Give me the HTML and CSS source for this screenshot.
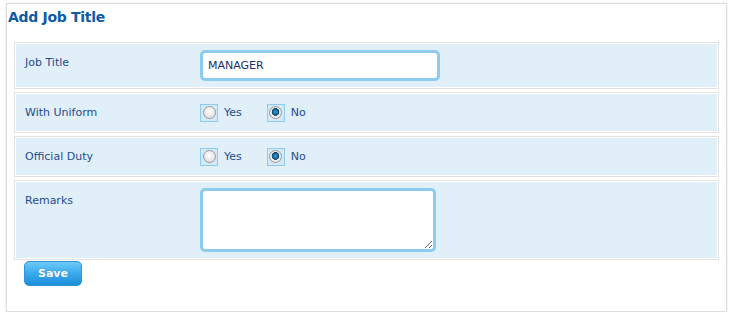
FILE: index.html
```html
<!DOCTYPE html>
<html lang="en">
<head>
    <meta charset="UTF-8">
    <meta name="viewport" content="width=device-width, initial-scale=1.0">
    <title>Add Job Title</title>
    <link rel="stylesheet" href="styles.css">
</head>
<body>
    <div class="panel">
        <h2 class="panel-title">Add Job Title</h2>
        <form class="form">
            <div class="row">
                <label class="label" for="jobTitle">Job Title</label>
                <div class="field">
                    <input type="text" id="jobTitle" class="text-input" value="MANAGER">
                </div>
            </div>
            <div class="row">
                <span class="label">With Uniform</span>
                <div class="field">
                    <label class="choice"><span class="radio-box"><input type="radio" name="uniform"></span>Yes</label>
                    <label class="choice"><span class="radio-box"><input type="radio" name="uniform" checked></span>No</label>
                </div>
            </div>
            <div class="row">
                <span class="label">Official Duty</span>
                <div class="field">
                    <label class="choice"><span class="radio-box"><input type="radio" name="duty"></span>Yes</label>
                    <label class="choice"><span class="radio-box"><input type="radio" name="duty" checked></span>No</label>
                </div>
            </div>
            <div class="row row-last">
                <label class="label" for="remarks">Remarks</label>
                <div class="field">
                    <textarea id="remarks" class="text-area"></textarea>
                </div>
            </div>
            <div class="actions">
                <button type="button" class="btn-save">Save</button>
            </div>
        </form>
    </div>
</body>
</html>
```

FILE: styles.css
```css
body {
    margin: 0;
    background-color: white;
    font-family: "DejaVu Sans", Verdana, sans-serif;
    font-size: 11px;
    color: #1d4c8f;
}
.panel {
    width: 721px;
    height: 309px;
    margin: 3px 0 0 6px;
    border: 1px solid #dddddd;
    box-shadow: 0 0 2px rgba(0, 0, 0, 0.12);
    box-sizing: border-box;
    background-color: white;
}
.panel-title {
    margin: 0;
    padding: 3px 0 0 1px;
    font-size: 14px;
    line-height: 20px;
    font-weight: bold;
    color: #0d5aa7;
    letter-spacing: -0.3px;
}
.form {
    margin: 15px 7px 0 7px;
}
.row {
    display: flex;
    align-items: flex-start;
    padding: 7px 10px;
    margin-bottom: 3px;
    background-color: #e1eff9;
    border: 1px solid #e2e2e2;
    box-shadow: inset 0 0 0 1px #ffffff;
}
.row-last {
    margin-bottom: 1px;
}
.label {
    width: 175px;
    line-height: 25px;
    flex-shrink: 0;
}
.field {
    display: flex;
    align-items: center;
    min-height: 25px;
}
.text-input {
    width: 240px;
    height: 31px;
    box-sizing: border-box;
    border: 3px solid #8ecbef;
    border-radius: 5px;
    padding: 0 5px;
    font-family: "DejaVu Sans", Verdana, sans-serif;
    font-size: 11px;
    color: #1b2f6b;
    outline: none;
}
.text-area {
    display: block;
    width: 236px;
    height: 64px;
    box-sizing: border-box;
    border: 3px solid #8ecbef;
    border-radius: 5px;
    margin: 0;
    outline: none;
}
.choice {
    display: flex;
    align-items: center;
    margin-right: 25px;
}
.radio-box {
    display: inline-flex;
    align-items: center;
    justify-content: center;
    width: 16px;
    height: 16px;
    border: 1px solid #8ecbef;
    background-color: #d3e9f8;
    margin-right: 6px;
}
.radio-box input {
    appearance: none;
    -webkit-appearance: none;
    margin: 0;
    width: 13px;
    height: 13px;
    border-radius: 50%;
    border: 1px solid #9a9a9a;
    box-sizing: border-box;
    background: radial-gradient(circle at 50% 40%, #ffffff 0%, #e6e6e6 60%, #cfcfcf 100%);
}
.radio-box input:checked {
    background: radial-gradient(circle at 50% 45%, #3fa3d8 0%, #0f5e92 34%, #173d63 44%, #f2f2f2 50%, #d8d8d8 100%);
}
.actions {
    padding: 0 10px;
}
.btn-save {
    width: 58px;
    height: 25px;
    border: 1px solid #2f93d6;
    border-radius: 5px;
    background: linear-gradient(to bottom, #6ecbf7 0%, #3aa9ec 50%, #1c8fdb 100%);
    color: white;
    font-family: "DejaVu Sans", Verdana, sans-serif;
    font-size: 11px;
    font-weight: bold;
    text-shadow: 0 0 1px rgba(0, 0, 0, 0.2);
    cursor: pointer;
}
```
